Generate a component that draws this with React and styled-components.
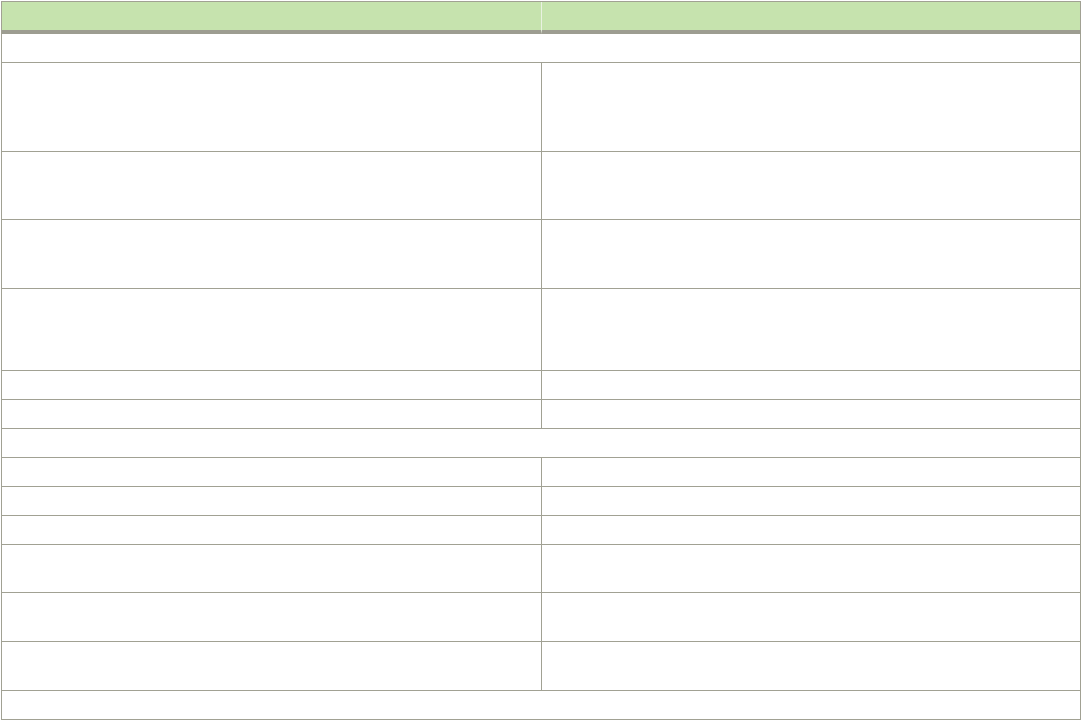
import React from 'react'
import styled, { createGlobalStyle } from 'styled-components';

const GlobalStyle = createGlobalStyle`
  html, body {
    margin: 0;
    padding: 0;
    background: #ffffff;
    font-family: "Liberation Sans", Arial, sans-serif;
  }
`;

const line = '#a1a193';

const rows = [
  { h: 29, span: true },
  { h: 89 },
  { h: 68 },
  { h: 69 },
  { h: 82 },
  { h: 29 },
  { h: 29 },
  { h: 29, span: true },
  { h: 29 },
  { h: 29 },
  { h: 29 },
  { h: 48 },
  { h: 49 },
  { h: 49 },
  { h: 29, span: true },
];

const App = () => {
  return (
    <Wrapper>
      <GlobalStyle />
      <Table>
        <HeadCell $divider />
        <HeadCell />
        {rows.map((r, i) =>
          r.span ? (
            <Cell key={i} $h={r.h} $span />
          ) : (
            <React.Fragment key={i}>
              <Cell $h={r.h} />
              <Cell $h={r.h} />
            </React.Fragment>
          )
        )}
      </Table>
    </Wrapper>
  )
};

const Wrapper = styled.div`
  padding: 1px 0 0 1px;
`;

const Table = styled.div`
  display: grid;
  grid-template-columns: 540px 539px;
  width: 1080px;
  box-sizing: border-box;
  border-top: 1px solid ${line};
  border-left: 1px solid ${line};
`;

const HeadCell = styled.div`
  box-sizing: border-box;
  height: 32px;
  background: #c6e3ae;
  border-bottom: 4px solid #9d9d91;
  border-right: 1px solid ${({ $divider }) => ($divider ? '#e9f2e1' : line)};
`;

const Cell = styled.div`
  box-sizing: border-box;
  height: ${({ $h }) => $h}px;
  grid-column: ${({ $span }) => ($span ? '1 / span 2' : 'auto')};
  border-right: 1px solid ${line};
  border-bottom: 1px solid ${line};
`;

export default App;
